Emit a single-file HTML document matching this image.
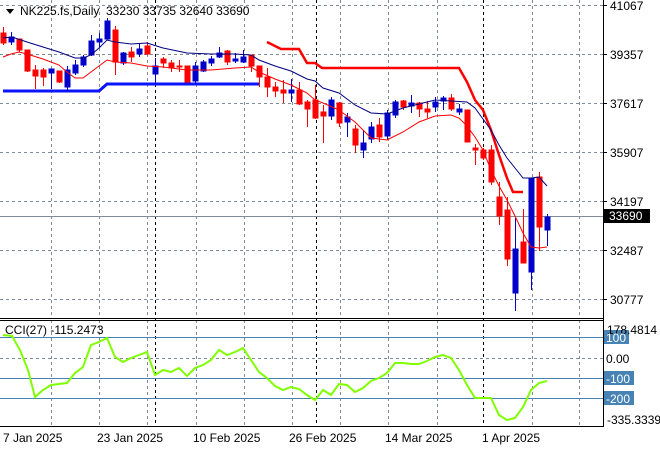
<!DOCTYPE html>
<html><head><meta charset="utf-8"><style>
html,body{margin:0;padding:0;background:#fff;}
svg{display:block;font-family:"Liberation Sans",sans-serif;font-size:12px;}
.r{fill:#ff0000;stroke:#ff0000}
.b{fill:#0000c8;stroke:#0000c8}
.g{stroke:#7f8b99;stroke-width:1;stroke-dasharray:3,3}
.k{stroke:#000;stroke-width:1;stroke-dasharray:3,3}
</style></head><body>
<svg width="660" height="450" viewBox="0 0 660 450" xmlns="http://www.w3.org/2000/svg">
<rect width="660" height="450" fill="#fff"/>
<g class="g">
<line x1="0" y1="5.5" x2="603" y2="5.5"/><line x1="0" y1="54.5" x2="603" y2="54.5"/><line x1="0" y1="103.5" x2="603" y2="103.5"/><line x1="0" y1="152.5" x2="603" y2="152.5"/><line x1="0" y1="201.5" x2="603" y2="201.5"/><line x1="0" y1="250.5" x2="603" y2="250.5"/><line x1="0" y1="299.5" x2="603" y2="299.5"/>
<line x1="51.5" y1="0" x2="51.5" y2="318"/><line x1="99.5" y1="0" x2="99.5" y2="318"/><line x1="147.5" y1="0" x2="147.5" y2="318"/><line x1="196.5" y1="0" x2="196.5" y2="318"/><line x1="244.5" y1="0" x2="244.5" y2="318"/><line x1="292.5" y1="0" x2="292.5" y2="318"/><line x1="340.5" y1="0" x2="340.5" y2="318"/><line x1="388.5" y1="0" x2="388.5" y2="318"/><line x1="437.5" y1="0" x2="437.5" y2="318"/><line x1="532.5" y1="0" x2="532.5" y2="318"/><line x1="579.5" y1="0" x2="579.5" y2="318"/>
<line x1="51.5" y1="320" x2="51.5" y2="426"/><line x1="99.5" y1="320" x2="99.5" y2="426"/><line x1="147.5" y1="320" x2="147.5" y2="426"/><line x1="196.5" y1="320" x2="196.5" y2="426"/><line x1="244.5" y1="320" x2="244.5" y2="426"/><line x1="292.5" y1="320" x2="292.5" y2="426"/><line x1="340.5" y1="320" x2="340.5" y2="426"/><line x1="388.5" y1="320" x2="388.5" y2="426"/><line x1="437.5" y1="320" x2="437.5" y2="426"/><line x1="532.5" y1="320" x2="532.5" y2="426"/><line x1="579.5" y1="320" x2="579.5" y2="426"/>
<line x1="0" y1="358.5" x2="603" y2="358.5"/>
</g>
<g class="k">
<line x1="155.5" y1="0" x2="155.5" y2="426"/><line x1="316.5" y1="0" x2="316.5" y2="426"/><line x1="483.5" y1="0" x2="483.5" y2="426"/>
</g>
<line x1="0" y1="216.5" x2="603" y2="216.5" stroke="#7f8b99"/>
<g stroke="#4682b4"><line x1="0" y1="337.5" x2="603" y2="337.5"/><line x1="0" y1="378.5" x2="603" y2="378.5"/><line x1="0" y1="398.5" x2="603" y2="398.5"/></g>
<polyline fill="none" stroke="#0a14ff" stroke-width="3" points="3,91 99,91 107,84 259,84"/>
<polyline fill="none" stroke="#ff0000" stroke-width="2.5" points="267,42 281,49 299,49 307,63 315,63 322,68 459,68 467,82 475,100 483,110 491,130 499,155 507,178 513,192 523,192"/>
<g stroke-width="1">
<line class="r" x1="3.5" y1="27" x2="3.5" y2="45"/><rect class="r" x="1" y="33" width="5" height="10"/>
<line class="b" x1="11.5" y1="32" x2="11.5" y2="45"/><rect class="b" x="9" y="37" width="5" height="5"/>
<line class="r" x1="19.5" y1="39" x2="19.5" y2="52"/><rect class="r" x="17" y="39" width="5" height="11"/>
<line class="r" x1="27.5" y1="50" x2="27.5" y2="72"/><rect class="r" x="25" y="50" width="5" height="21"/>
<line class="r" x1="35.5" y1="65" x2="35.5" y2="89"/><rect class="r" x="33" y="70" width="5" height="6"/>
<line class="r" x1="43.5" y1="68" x2="43.5" y2="86"/><rect class="r" x="41" y="70" width="5" height="7"/>
<line class="b" x1="51.5" y1="69" x2="51.5" y2="89"/><rect class="b" x="49" y="69" width="5" height="4"/>
<line class="r" x1="59.5" y1="71" x2="59.5" y2="83"/><rect class="r" x="57" y="71" width="5" height="11"/>
<line class="b" x1="67.5" y1="66" x2="67.5" y2="91"/><rect class="b" x="65" y="70" width="5" height="17"/>
<line class="b" x1="75.5" y1="60" x2="75.5" y2="75"/><rect class="b" x="73" y="65" width="5" height="8"/>
<line class="b" x1="83.5" y1="55" x2="83.5" y2="67"/><rect class="b" x="81" y="57" width="5" height="8"/>
<line class="b" x1="91.5" y1="35" x2="91.5" y2="56"/><rect class="b" x="89" y="41" width="5" height="14"/>
<line class="b" x1="99.5" y1="33" x2="99.5" y2="47"/><rect class="b" x="97" y="39" width="5" height="3"/>
<line class="b" x1="107.5" y1="18" x2="107.5" y2="39"/><rect class="b" x="105" y="21" width="5" height="18"/>
<line class="r" x1="115.5" y1="26" x2="115.5" y2="75"/><rect class="r" x="113" y="30" width="5" height="32"/>
<line class="b" x1="123.5" y1="52" x2="123.5" y2="65"/><rect class="b" x="121" y="53" width="5" height="10"/>
<line class="r" x1="131.5" y1="47" x2="131.5" y2="62"/><rect class="r" x="129" y="52" width="5" height="5"/>
<line class="b" x1="139.5" y1="43" x2="139.5" y2="57"/><rect class="b" x="137" y="49" width="5" height="5"/>
<line class="r" x1="147.5" y1="42" x2="147.5" y2="55"/><rect class="r" x="145" y="46" width="5" height="8"/>
<line class="b" x1="155.5" y1="58" x2="155.5" y2="83"/><rect class="b" x="153" y="66" width="5" height="8"/>
<line class="r" x1="163.5" y1="57" x2="163.5" y2="68"/><rect class="r" x="161" y="59" width="5" height="4"/>
<line class="r" x1="171.5" y1="60" x2="171.5" y2="72"/><rect class="r" x="169" y="63" width="5" height="5"/>
<line class="r" x1="179.5" y1="60" x2="179.5" y2="72"/><rect class="r" x="177" y="66" width="5" height="1"/>
<line class="r" x1="187.5" y1="66" x2="187.5" y2="83"/><rect class="r" x="185" y="66" width="5" height="16"/>
<line class="b" x1="195.5" y1="62" x2="195.5" y2="83"/><rect class="b" x="193" y="66" width="5" height="15"/>
<line class="b" x1="203.5" y1="60" x2="203.5" y2="72"/><rect class="b" x="201" y="62" width="5" height="9"/>
<line class="b" x1="211.5" y1="56" x2="211.5" y2="66"/><rect class="b" x="209" y="59" width="5" height="4"/>
<line class="b" x1="219.5" y1="47" x2="219.5" y2="58"/><rect class="b" x="217" y="53" width="5" height="4"/>
<line class="r" x1="227.5" y1="50" x2="227.5" y2="65"/><rect class="r" x="225" y="51" width="5" height="11"/>
<line class="b" x1="235.5" y1="53" x2="235.5" y2="63"/><rect class="b" x="233" y="59" width="5" height="2"/>
<line class="b" x1="243.5" y1="50" x2="243.5" y2="63"/><rect class="b" x="241" y="57" width="5" height="5"/>
<line class="r" x1="251.5" y1="55" x2="251.5" y2="72"/><rect class="r" x="249" y="55" width="5" height="11"/>
<line class="r" x1="259.5" y1="66" x2="259.5" y2="87"/><rect class="r" x="257" y="66" width="5" height="11"/>
<line class="r" x1="267.5" y1="68" x2="267.5" y2="97"/><rect class="r" x="265" y="77" width="5" height="10"/>
<line class="r" x1="275.5" y1="82" x2="275.5" y2="97"/><rect class="r" x="273" y="87" width="5" height="4"/>
<line class="r" x1="283.5" y1="80" x2="283.5" y2="103"/><rect class="r" x="281" y="90" width="5" height="3"/>
<line class="b" x1="291.5" y1="79" x2="291.5" y2="102"/><rect class="b" x="289" y="90" width="5" height="3"/>
<line class="r" x1="299.5" y1="82" x2="299.5" y2="105"/><rect class="r" x="297" y="90" width="5" height="14"/>
<line class="r" x1="307.5" y1="100" x2="307.5" y2="127"/><rect class="r" x="305" y="102" width="5" height="7"/>
<line class="r" x1="315.5" y1="85" x2="315.5" y2="119"/><rect class="r" x="313" y="100" width="5" height="18"/>
<line class="r" x1="323.5" y1="105" x2="323.5" y2="143"/><rect class="r" x="321" y="112" width="5" height="4"/>
<line class="b" x1="331.5" y1="97" x2="331.5" y2="120"/><rect class="b" x="329" y="100" width="5" height="16"/>
<line class="r" x1="339.5" y1="102" x2="339.5" y2="127"/><rect class="r" x="337" y="103" width="5" height="20"/>
<line class="b" x1="347.5" y1="113" x2="347.5" y2="137"/><rect class="b" x="345" y="117" width="5" height="5"/>
<line class="r" x1="355.5" y1="125" x2="355.5" y2="153"/><rect class="r" x="353" y="129" width="5" height="16"/>
<line class="b" x1="363.5" y1="130" x2="363.5" y2="158"/><rect class="b" x="361" y="143" width="5" height="7"/>
<line class="b" x1="371.5" y1="122" x2="371.5" y2="143"/><rect class="b" x="369" y="127" width="5" height="12"/>
<line class="r" x1="379.5" y1="118" x2="379.5" y2="142"/><rect class="r" x="377" y="125" width="5" height="12"/>
<line class="b" x1="387.5" y1="110" x2="387.5" y2="140"/><rect class="b" x="385" y="113" width="5" height="23"/>
<line class="b" x1="395.5" y1="100" x2="395.5" y2="118"/><rect class="b" x="393" y="102" width="5" height="13"/>
<line class="r" x1="403.5" y1="100" x2="403.5" y2="110"/><rect class="r" x="401" y="101" width="5" height="6"/>
<line class="b" x1="411.5" y1="95" x2="411.5" y2="113"/><rect class="b" x="409" y="103" width="5" height="3"/>
<line class="r" x1="419.5" y1="102" x2="419.5" y2="117"/><rect class="r" x="417" y="103" width="5" height="6"/>
<line class="r" x1="427.5" y1="101" x2="427.5" y2="118"/><rect class="r" x="425" y="109" width="5" height="3"/>
<line class="b" x1="435.5" y1="97" x2="435.5" y2="112"/><rect class="b" x="433" y="102" width="5" height="5"/>
<line class="b" x1="443.5" y1="96" x2="443.5" y2="110"/><rect class="b" x="441" y="98" width="5" height="3"/>
<line class="r" x1="451.5" y1="94" x2="451.5" y2="111"/><rect class="r" x="449" y="98" width="5" height="11"/>
<line class="b" x1="459.5" y1="104" x2="459.5" y2="115"/><rect class="b" x="457" y="109" width="5" height="3"/>
<line class="r" x1="467.5" y1="110" x2="467.5" y2="142"/><rect class="r" x="465" y="110" width="5" height="32"/>
<line class="r" x1="475.5" y1="144" x2="475.5" y2="165"/><rect class="r" x="473" y="148" width="5" height="2"/>
<line class="r" x1="483.5" y1="148" x2="483.5" y2="160"/><rect class="r" x="481" y="150" width="5" height="8"/>
<line class="r" x1="491.5" y1="145" x2="491.5" y2="185"/><rect class="r" x="489" y="150" width="5" height="32"/>
<line class="r" x1="499.5" y1="182" x2="499.5" y2="225"/><rect class="r" x="497" y="197" width="5" height="19"/>
<line class="r" x1="507.5" y1="197" x2="507.5" y2="266"/><rect class="r" x="505" y="210" width="5" height="49"/>
<line class="b" x1="515.5" y1="218" x2="515.5" y2="311"/><rect class="b" x="513" y="249" width="5" height="44"/>
<line class="r" x1="523.5" y1="209" x2="523.5" y2="263"/><rect class="r" x="521" y="242" width="5" height="21"/>
<line class="b" x1="531.5" y1="178" x2="531.5" y2="290"/><rect class="b" x="529" y="178" width="5" height="94"/>
<line class="r" x1="539.5" y1="172" x2="539.5" y2="251"/><rect class="r" x="537" y="177" width="5" height="50"/>
<line class="b" x1="547.5" y1="214" x2="547.5" y2="246"/><rect class="b" x="545" y="217" width="5" height="13"/>
</g>
<polyline fill="none" stroke="#000080" stroke-width="1" points="3,38 12,37 27,42 43,47 59,52 75,58 83,58 91,55 99,48 107,40 115,42 131,44 147,43 163,48 187,53 211,54 235,54 251,55 259,60 275,66 291,71 307,79 315,81 323,88 339,93 355,105 371,113 387,114 403,108 419,104 435,100 451,101 467,102 475,108 483,119 491,130 499,145 507,158 515,168 523,178 531,178 539,177 547,186"/>
<polyline fill="none" stroke="#ff0000" stroke-width="1" points="3,57 11,54 19,52 27,54 43,59 59,65 67,72 75,78 83,78 91,72 99,66 107,60 115,62 131,63 147,66 163,67 187,70 211,70 235,68 251,67 259,72 275,79 291,85 307,93 315,100 323,103 339,110 355,122 371,138 387,140 403,132 419,122 435,116 451,115 459,118 467,126 475,137 483,150 491,170 499,186 507,200 515,216 523,233 531,247 539,248 547,247"/>
<polyline fill="none" stroke="#7fff00" stroke-width="2" points="3,335 12,336 20,350 28,370 35,397 43,390 51,385 59,384 67,383 75,373 83,367 91,345 99,342 107,338 115,357 123,362 131,358 139,355 147,352 155,375 163,370 171,372 179,368 187,376 195,368 203,365 211,360 219,350 227,355 235,352 243,348 251,360 259,372 267,378 275,386 283,390 291,387 299,389 307,395 315,400 323,390 331,395 339,384 347,385 355,392 363,388 371,381 379,378 387,373 395,363 403,363 411,364 419,364 427,361 435,357 443,355 451,358 459,370 467,385 475,398 483,398 491,398 499,415 507,420 515,418 523,407 531,390 539,383 547,381"/>
<g stroke="#000" fill="none" stroke-width="1">
<line x1="0" y1="318.5" x2="604" y2="318.5"/><line x1="0" y1="320.5" x2="604" y2="320.5"/>
<line x1="603.5" y1="0" x2="603.5" y2="427"/><line x1="0" y1="426.5" x2="604" y2="426.5"/>
</g>
<g stroke="#000"><line x1="603" y1="5.5" x2="607" y2="5.5"/><line x1="603" y1="54.5" x2="607" y2="54.5"/><line x1="603" y1="103.5" x2="607" y2="103.5"/><line x1="603" y1="152.5" x2="607" y2="152.5"/><line x1="603" y1="201.5" x2="607" y2="201.5"/><line x1="603" y1="250.5" x2="607" y2="250.5"/><line x1="603" y1="299.5" x2="607" y2="299.5"/></g>
<g fill="#000">
<text x="610" y="10">41067</text><text x="610" y="59">39357</text><text x="610" y="108">37617</text><text x="610" y="157">35907</text><text x="610" y="206">34197</text><text x="610" y="255">32487</text><text x="610" y="304">30777</text>
</g>
<rect x="604" y="209" width="46" height="14" fill="#000"/><text x="609" y="220" fill="#fff">33690</text>
<rect x="604" y="330" width="25" height="14" fill="#4682b4"/>
<rect x="604" y="371" width="30" height="14" fill="#4682b4"/>
<rect x="604" y="391" width="30" height="14" fill="#4682b4"/>
<text x="607" y="334" fill="#000">178.4814</text>
<text x="606" y="342" fill="#fff">100</text>
<text x="606" y="363" fill="#000">0.00</text>
<text x="606" y="383" fill="#fff">-100</text>
<text x="606" y="403" fill="#fff">-200</text>
<text x="607" y="424" fill="#000">-335.3339</text>
<polygon points="6,9 14,9 10,14" fill="#000"/>
<text x="20" y="15" fill="#000">NK225.fs,Daily</text>
<text x="106" y="15" fill="#000">33230 33735 32640 33690</text>
<text x="5" y="334" fill="#000">CCI(27) -115.2473</text>
<g fill="#000">
<text x="3" y="442">7 Jan 2025</text><text x="97" y="442">23 Jan 2025</text><text x="193" y="442">10 Feb 2025</text><text x="289" y="442">26 Feb 2025</text><text x="385" y="442">14 Mar 2025</text><text x="482" y="442">1 Apr 2025</text>
</g>
</svg>
</body></html>
